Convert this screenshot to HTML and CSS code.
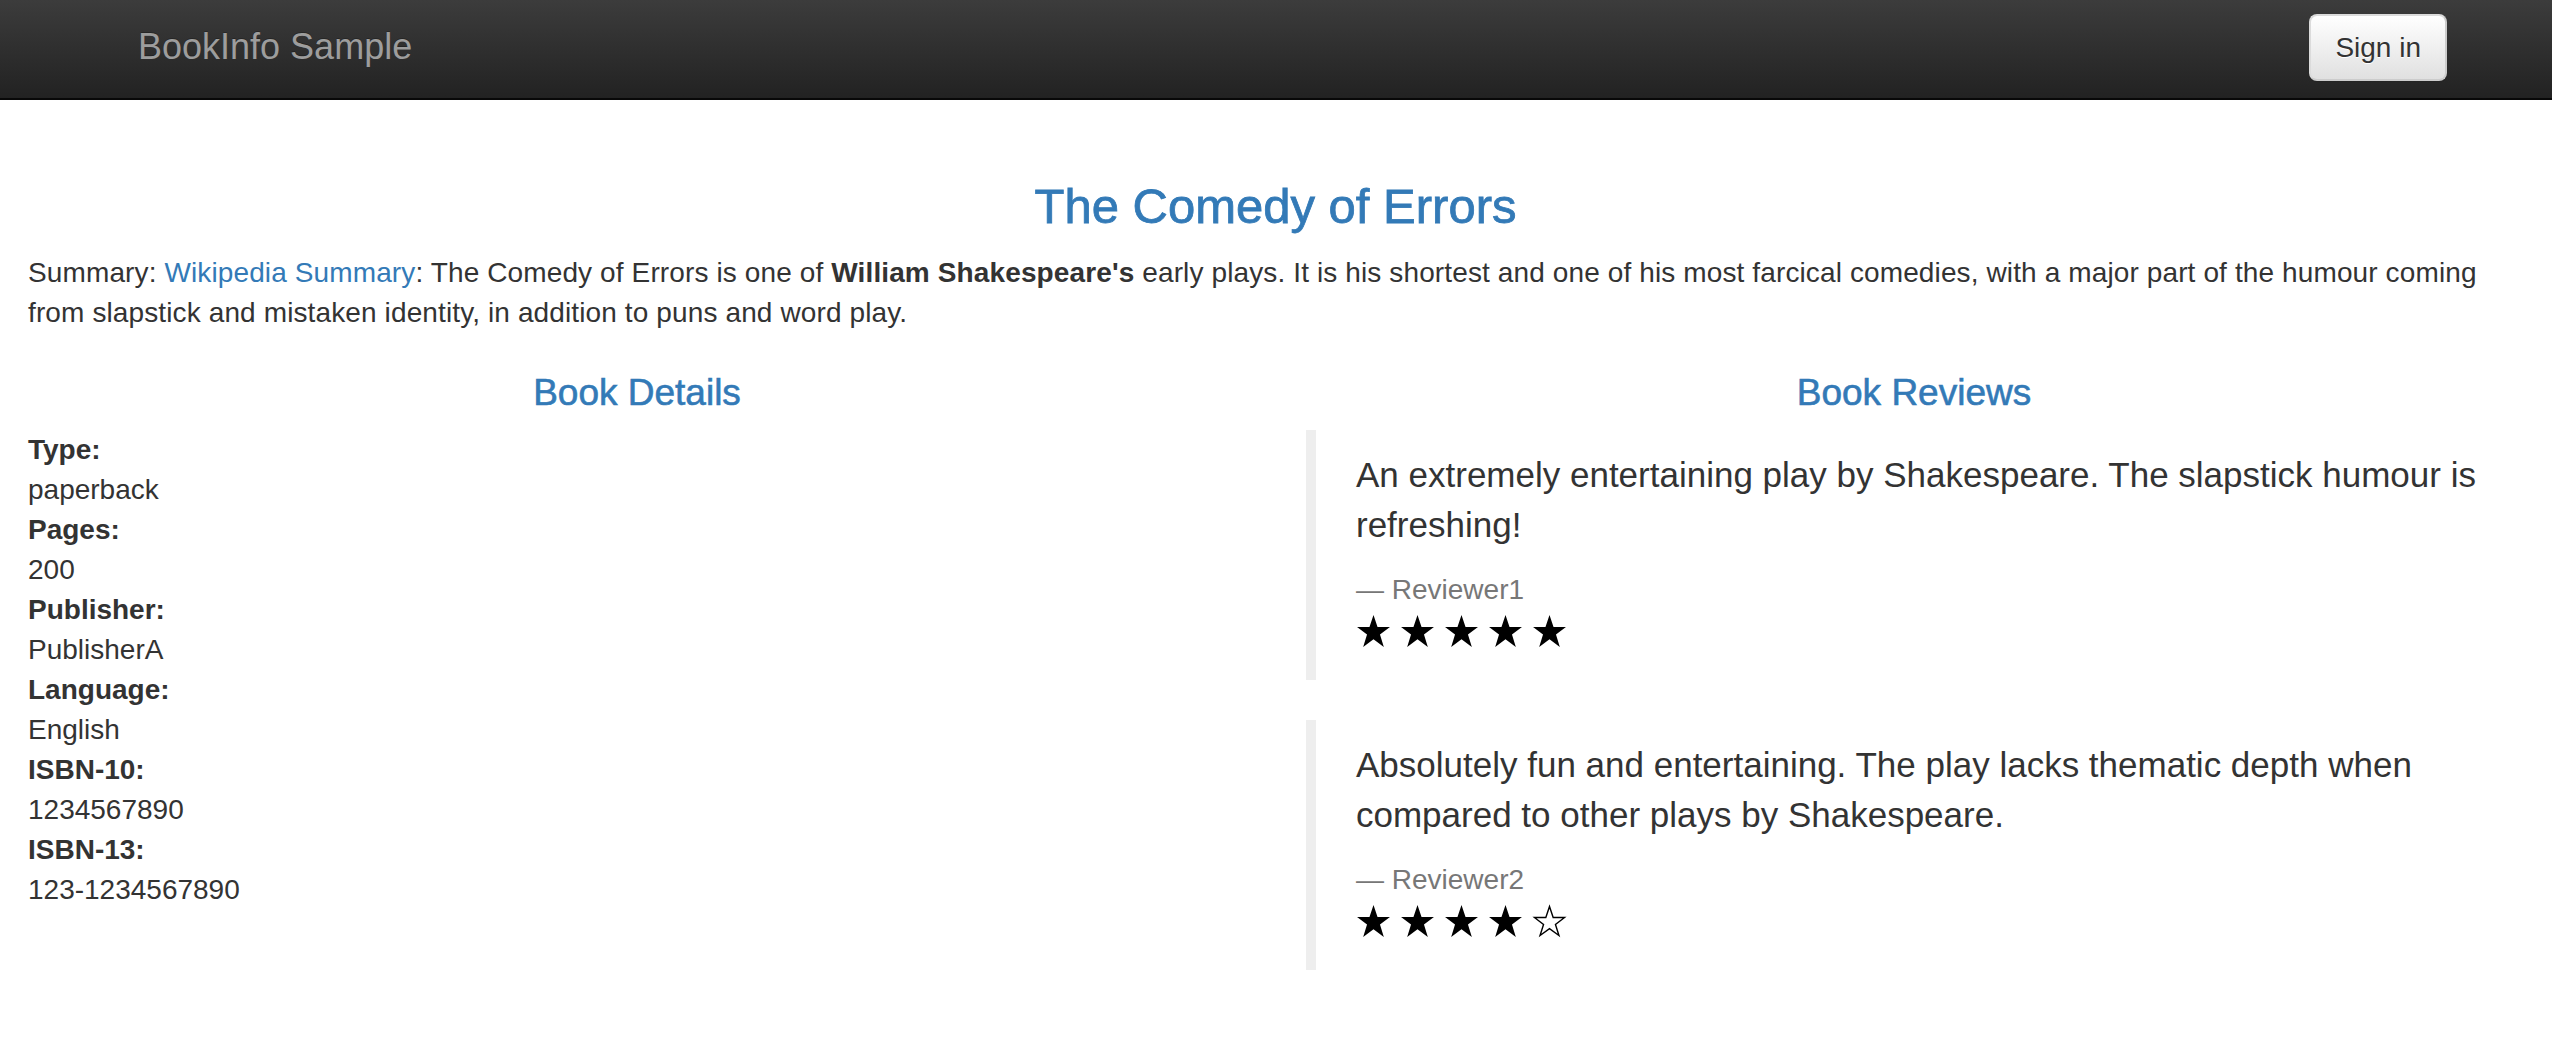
FILE: index.html
```html
<!DOCTYPE html>
<html lang="en">
<head>
<meta charset="utf-8">
<title>Simple Bookstore App</title>
<link rel="stylesheet" href="styles.css">
</head>
<body>
<nav class="navbar">
  <a class="brand" href="#">BookInfo Sample</a>
  <button class="btn-signin" type="button">Sign in</button>
</nav>

<div class="container">
  <h3 class="title">The Comedy of Errors</h3>
  <p class="summary">Summary: <a href="#" class="link">Wikipedia Summary</a>: The Comedy of Errors is one of <b>William Shakespeare's</b> early plays. It is his shortest and one of his most farcical comedies, with a major part of the humour coming from slapstick and mistaken identity, in addition to puns and word play.</p>
</div>

<div class="row">
  <div class="col">
    <h4 class="section-title">Book Details</h4>
    <dl class="details">
      <dt>Type:</dt><dd>paperback</dd>
      <dt>Pages:</dt><dd>200</dd>
      <dt>Publisher:</dt><dd>PublisherA</dd>
      <dt>Language:</dt><dd>English</dd>
      <dt>ISBN-10:</dt><dd>1234567890</dd>
      <dt>ISBN-13:</dt><dd>123-1234567890</dd>
    </dl>
  </div>
  <div class="col">
    <h4 class="section-title">Book Reviews</h4>
    <blockquote class="review">
      <p>An extremely entertaining play by Shakespeare. The slapstick humour is refreshing!</p>
      <small class="reviewer">Reviewer1</small>
      <div class="stars">
        <svg class="star" viewBox="0 0 100 100"><polygon class="full" points="50,3 61.5,37 97,37 68.5,58.5 79.5,94 50,72 20.5,94 31.5,58.5 3,37 38.5,37"/></svg>
        <svg class="star" viewBox="0 0 100 100"><polygon class="full" points="50,3 61.5,37 97,37 68.5,58.5 79.5,94 50,72 20.5,94 31.5,58.5 3,37 38.5,37"/></svg>
        <svg class="star" viewBox="0 0 100 100"><polygon class="full" points="50,3 61.5,37 97,37 68.5,58.5 79.5,94 50,72 20.5,94 31.5,58.5 3,37 38.5,37"/></svg>
        <svg class="star" viewBox="0 0 100 100"><polygon class="full" points="50,3 61.5,37 97,37 68.5,58.5 79.5,94 50,72 20.5,94 31.5,58.5 3,37 38.5,37"/></svg>
        <svg class="star" viewBox="0 0 100 100"><polygon class="full" points="50,3 61.5,37 97,37 68.5,58.5 79.5,94 50,72 20.5,94 31.5,58.5 3,37 38.5,37"/></svg>
      </div>
    </blockquote>
    <blockquote class="review">
      <p>Absolutely fun and entertaining. The play lacks thematic depth when compared to other plays by Shakespeare.</p>
      <small class="reviewer">Reviewer2</small>
      <div class="stars">
        <svg class="star" viewBox="0 0 100 100"><polygon class="full" points="50,3 61.5,37 97,37 68.5,58.5 79.5,94 50,72 20.5,94 31.5,58.5 3,37 38.5,37"/></svg>
        <svg class="star" viewBox="0 0 100 100"><polygon class="full" points="50,3 61.5,37 97,37 68.5,58.5 79.5,94 50,72 20.5,94 31.5,58.5 3,37 38.5,37"/></svg>
        <svg class="star" viewBox="0 0 100 100"><polygon class="full" points="50,3 61.5,37 97,37 68.5,58.5 79.5,94 50,72 20.5,94 31.5,58.5 3,37 38.5,37"/></svg>
        <svg class="star" viewBox="0 0 100 100"><polygon class="full" points="50,3 61.5,37 97,37 68.5,58.5 79.5,94 50,72 20.5,94 31.5,58.5 3,37 38.5,37"/></svg>
        <svg class="star" viewBox="0 0 100 100"><polygon class="empty" points="50,7 60.5,38.5 93,38.5 67,58.5 77,90 50,70.5 23,90 33,58.5 7,38.5 39.5,38.5"/></svg>
      </div>
    </blockquote>
  </div>
</div>
</body>
</html>
```

FILE: styles.css
```css
* { box-sizing: border-box; }

html, body {
  margin: 0;
  padding: 0;
  background: #fff;
}

body {
  font-family: "Liberation Sans", Arial, Helvetica, sans-serif;
  font-size: 28px;
  line-height: 40px;
  color: #333;
}

.navbar {
  height: 100px;
  display: flex;
  align-items: center;
  justify-content: space-between;
  padding: 0 105px 0 138px;
  background: linear-gradient(to bottom, #3c3c3c 0%, #222 100%);
  border-bottom: 2px solid #080808;
  margin-bottom: 40px;
}

.brand {
  color: #9d9d9d;
  font-size: 36px;
  line-height: 40px;
  text-decoration: none;
  text-shadow: 0 -1px 0 rgba(0, 0, 0, 0.25);
  margin-top: -4px;
}

.btn-signin {
  font-family: "Liberation Sans", Arial, Helvetica, sans-serif;
  font-size: 28px;
  line-height: 40px;
  height: 67px;
  padding: 12px 24px;
  margin-top: -3px;
  color: #333;
  background: linear-gradient(to bottom, #fff 0%, #e0e0e0 100%);
  border: 2px solid #ccc;
  border-color: #dbdbdb #ccc #ccc #dbdbdb;
  border-radius: 8px;
  text-shadow: 0 1px 0 #fff;
  box-shadow: inset 0 1px 0 rgba(255, 255, 255, 0.15), 0 1px 1px rgba(0, 0, 0, 0.075);
  cursor: pointer;
}

.container {
  display: flow-root;
  padding: 0 29px 0 28px;
}

.title {
  margin: 40px 0 20px;
  font-size: 49px;
  line-height: 53px;
  font-weight: 500;
  color: #337ab7;
  -webkit-text-stroke: 0.8px #337ab7;
  text-align: center;
}

.summary {
  margin: 0 0 20px;
  letter-spacing: 0.12px;
}

.link {
  color: #337ab7;
  text-decoration: none;
}

.row {
  display: grid;
  grid-template-columns: 1fr 1fr;
}

.col {
  padding: 0 30px;
}

.col:first-child {
  padding-left: 28px;
}

.section-title {
  margin: 20px 0 17px;
  font-size: 37px;
  line-height: 40px;
  font-weight: 500;
  color: #337ab7;
  -webkit-text-stroke: 0.6px #337ab7;
  text-align: center;
}

.details {
  margin: 0 0 40px;
}

.details dt {
  font-weight: 700;
}

.details dd {
  margin: 0;
}

.review {
  margin: 0 0 40px;
  padding: 20px 40px;
  border-left: 10px solid #eee;
  font-size: 35px;
  line-height: 50px;
}

.review p {
  margin: 0 0 20px;
}

.reviewer {
  display: block;
  font-size: 28px;
  line-height: 40px;
  color: #777;
}

.reviewer::before {
  content: "\2014 \00A0";
}

.stars {
  display: flex;
  align-items: center;
  height: 50px;
  padding-bottom: 8px;
  gap: 9px;
}

.star {
  width: 35px;
  height: 35px;
  display: block;
}

.star .full {
  fill: #000;
}

.star .empty {
  fill: none;
  stroke: #000;
  stroke-width: 4;
  stroke-linejoin: miter;
}
```
